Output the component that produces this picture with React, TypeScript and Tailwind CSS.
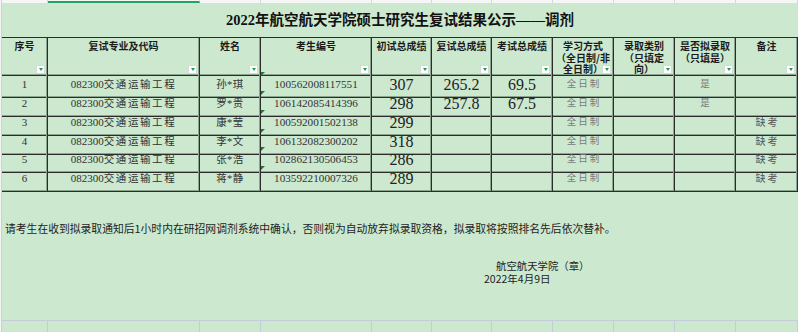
import React from "react";

const SERIF = { fontFamily: '"Liberation Serif","Noto Sans CJK SC",serif' };
const SANS = { fontFamily: '"Noto Sans CJK SC","Liberation Sans",sans-serif' };

const COLS = "grid grid-cols-[46px_152px_61px_111px_60px_60px_61px_61px_61px_61px_62px]";

function Filter() {
  return (
    <span className="absolute right-[2px] bottom-[1px] w-[9px] h-[9px] bg-white border border-[#d9d9d9] flex items-center justify-center">
      <span className="block w-0 h-0 border-l-[2.5px] border-r-[2.5px] border-t-[3px] border-l-transparent border-r-transparent border-t-[#1f9d55]" />
    </span>
  );
}

const cellBase =
  "relative border-r border-b border-[#2c2c2c] shadow-[inset_-1px_-1px_0_#8da590]";

const headers: string[][] = [
  ["序号"],
  ["复试专业及代码"],
  ["姓名"],
  ["考生编号"],
  ["初试总成绩"],
  ["复试总成绩"],
  ["考试总成绩"],
  ["学习方式", "（全日制/非", "全日制）"],
  ["录取类别", "（只填定", "向）"],
  ["是否拟录取", "（只填是）"],
  ["备注"],
];

type Row = {
  no: string;
  name: string;
  id: string;
  s1: string;
  s2: string;
  s3: string;
  yes: boolean;
  absent: boolean;
  h: string;
};

const rows: Row[] = [
  { no: "1", name: "孙*琪", id: "100562008117551", s1: "307", s2: "265.2", s3: "69.5", yes: true, absent: false, h: "h-[19px]" },
  { no: "2", name: "罗*贵", id: "106142085414396", s1: "298", s2: "257.8", s3: "67.5", yes: true, absent: false, h: "h-[19px]" },
  { no: "3", name: "康*莹", id: "100592001502138", s1: "299", s2: "", s3: "", yes: false, absent: true, h: "h-[19px]" },
  { no: "4", name: "李*文", id: "106132082300202", s1: "318", s2: "", s3: "", yes: false, absent: true, h: "h-[18px]" },
  { no: "5", name: "张*浩", id: "102862130506453", s1: "286", s2: "", s3: "", yes: false, absent: true, h: "h-[19px]" },
  { no: "6", name: "蒋*静", id: "103592210007326", s1: "289", s2: "", s3: "", yes: false, absent: true, h: "h-[18px]" },
];

export default function App() {
  return (
    <div className="w-[798px] h-[332px] overflow-hidden bg-white flex flex-col" style={SANS}>
      {/* top strip (cut-off column header) */}
      <div className="h-[3px] flex bg-[#f6f6f6]">
        <div className="w-[3px] border-r border-[#d0d0d0]" />
        <div className={COLS + " flex-1"}>
          <div className="border-r border-[#d6d6d6]" />
          <div className="border-r border-[#d6d6d6] border-b-2 border-b-[#21a366]" />
          <div className="border-r border-[#d6d6d6]" />
          <div className="border-r border-[#d6d6d6]" />
          <div className="border-r border-[#d6d6d6]" />
          <div className="border-r border-[#d6d6d6]" />
          <div className="border-r border-[#d6d6d6]" />
          <div className="border-r border-[#d6d6d6]" />
          <div className="border-r border-[#d6d6d6]" />
          <div className="border-r border-[#d6d6d6]" />
          <div className="border-r border-[#d6d6d6]" />
        </div>
      </div>

      <div className="flex-1 flex">
        {/* left row-header strip */}
        <div className="w-[3px] bg-[#f4f4f4] border-r border-[#c9d0d8]" />

        <div className="flex-1 bg-[#cce8cf] flex flex-col">
          {/* title */}
          <div
            className="h-[34px] flex items-center justify-center text-[14.5px] font-bold text-[#111] pt-[1px]"
            style={SERIF}
          >
            2022年航空航天学院硕士研究生复试结果公示——调剂
          </div>

          {/* header row */}
          <div className={COLS + " h-[35px]"}>
            {headers.map((lines, i) => (
              <div
                key={i}
                className={cellBase + " border-t border-t-[#2c2c2c] flex flex-col items-center pt-[2px] text-[10px] font-bold leading-[11.5px] text-[#1a1a1a]"}
              >
                {lines.map((l, j) => (
                  <span key={j} className="whitespace-nowrap">
                    {l}
                  </span>
                ))}
                <Filter />
              </div>
            ))}
          </div>

          {/* data rows */}
          {rows.map((r) => (
            <div key={r.no} className={COLS + " " + r.h}>
              <div className={cellBase + " flex items-center justify-center text-[11px] text-[#333]"} style={SERIF}>
                {r.no}
              </div>
              <div className={cellBase + " flex items-center justify-center text-[11px] text-[#333]"}>
                <span style={SERIF}>082300</span>
                <span className="tracking-[1.6px] text-[10.5px]" style={SERIF}>交通运输工程</span>
              </div>
              <div className={cellBase + " flex items-center justify-center text-[10.5px] text-[#333] tracking-[0.5px]"} style={SERIF}>
                {r.name}
              </div>
              <div className={cellBase + " flex items-center justify-center text-[11.2px] text-[#333]"} style={SERIF}>
                <span className="absolute left-0 top-0 w-0 h-0 border-t-[4px] border-r-[4px] border-t-[#1d7a33] border-r-transparent" />
                {r.id}
              </div>
              <div className={cellBase + " flex items-center justify-center text-[16px] text-[#222] pt-[1px]"} style={SERIF}>
                {r.s1}
              </div>
              <div className={cellBase + " flex items-center justify-center text-[16px] text-[#222] pt-[1px]"} style={SERIF}>
                {r.s2}
              </div>
              <div className={cellBase + " flex items-center justify-center text-[16px] text-[#222] pt-[1px]"} style={SERIF}>
                {r.s3}
              </div>
              <div className={cellBase + " flex items-center justify-center text-[9.5px] text-[#7a7a7a] tracking-[2px] pl-[2px]"} style={SERIF}>
                全日制
              </div>
              <div className={cellBase} />
              <div className={cellBase + " flex items-center justify-center text-[9.5px] text-[#7a7a7a]"} style={SERIF}>
                {r.yes ? "是" : ""}
              </div>
              <div className={cellBase + " flex items-center justify-center text-[10px] text-[#555] tracking-[2px] pl-[2px]"} style={SERIF}>
                {r.absent ? "缺考" : ""}
              </div>
            </div>
          ))}

          {/* notes area */}
          <div className="h-[136px] flex flex-col text-[#1e1e1e]">
            <div className="mt-[37px] pl-[3px] text-[10.8px] leading-[14px] whitespace-nowrap">
              请考生在收到拟录取通知后1小时内在研招网调剂系统中确认，否则视为自动放弃拟录取资格，拟录取将按照排名先后依次替补。
            </div>
            <div className="mt-[24px] pl-[494px] text-[10.4px] leading-[13px] whitespace-nowrap">
              航空航天学院（章）
            </div>
            <div className="pl-[482px] text-[10.5px] leading-[13px] whitespace-nowrap">2022年4月9日</div>
          </div>

          {/* bottom gridline row */}
          <div className={COLS + " flex-1 border-t border-[#c3ccd8]"}>
            {headers.map((_, i) => (
              <div key={i} className="border-r border-[#c3ccd8]" />
            ))}
          </div>
        </div>
      </div>
    </div>
  );
}
